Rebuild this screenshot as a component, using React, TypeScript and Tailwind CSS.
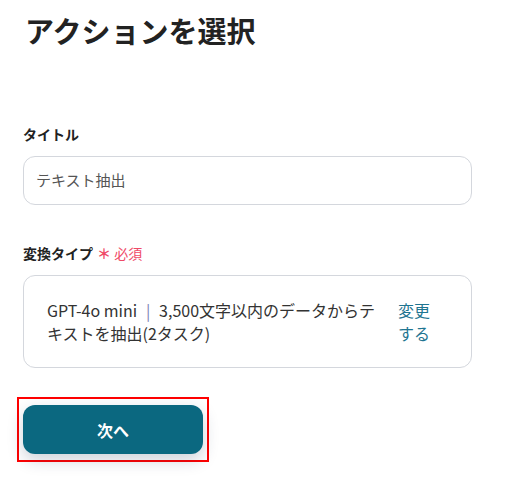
import React from "react";

export default function App() {
  return (
    <div className="w-[521px] h-[484px] bg-white font-['Noto_Sans_CJK_JP',sans-serif] text-[#333] overflow-hidden">
      <div className="pl-[23px] pr-[49px] pt-[10px]">
        {/* Page title */}
        <h1 className="pl-[2px] text-[29px] leading-[40px] font-bold text-[#222]">アクションを選択</h1>

        {/* Title field */}
        <div className="mt-[74px]">
          <label className="block text-[14px] leading-[20px] font-bold text-[#222]">タイトル</label>
          <div className="mt-[12px] h-[49px] rounded-xl border border-[#d4d7dd] flex items-center px-[12px]">
            <span className="text-[15px] text-[#555]">テキスト抽出</span>
          </div>
        </div>

        {/* Convert type */}
        <div className="mt-[38px]">
          <div className="flex items-center gap-[4px] text-[14px] leading-[20px]">
            <span className="font-bold text-[#222]">変換タイプ</span>
            <span className="text-[#ef4a67] text-[14px]">
              <span className="font-bold">＊</span> 必須
            </span>
          </div>
          <div className="mt-[12px] h-[93px] rounded-xl border border-[#d4d7dd] flex items-center pl-[23px] pr-[33px]">
            <p className="flex-1 text-[16px] leading-[23px] text-[#333]">
              GPT-4o mini
              <span className="inline-block w-[22px] text-center text-[#7b82b5]">|</span>
              3,500文字以内のデータからテキストを抽出(2タスク)
            </p>
            <button className="shrink-0 w-[40px] ml-[14px] text-left text-[16px] leading-[23px] text-[#1f7591]">
              変更する
            </button>
          </div>
        </div>

        {/* Next button */}
        <div className="mt-[29px] -ml-[6px] w-[192px] border-2 border-[#ff0000] px-[4px] py-[6px]">
          <button className="w-full h-[49px] rounded-xl bg-[#0b6880] text-white text-[16px] font-bold shadow-[0_6px_16px_rgba(30,50,80,0.22)]">
            次へ
          </button>
        </div>
      </div>
    </div>
  );
}
